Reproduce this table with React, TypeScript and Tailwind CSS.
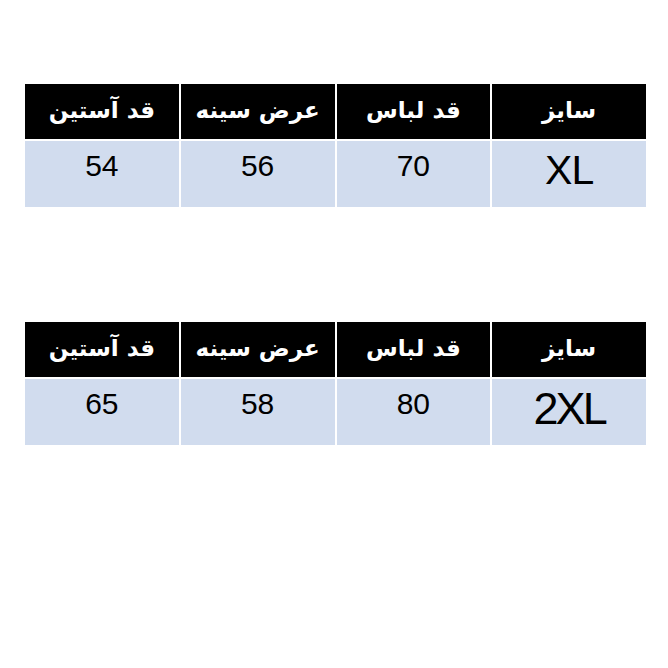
const tables = [
  { size: "XL", length: "70", chest: "56", sleeve: "54", sizeClass: "text-[41px] tracking-[-1px]" },
  { size: "2XL", length: "80", chest: "58", sleeve: "65", sizeClass: "text-[45px] tracking-[-3px]" },
];

const headers = ["سایز", "قد لباس", "عرض سینه", "قد آستین"];

const SizeTable = ({ row }: { row: (typeof tables)[number] }) => {
  return (
    <div dir="rtl" className="grid grid-cols-4 gap-x-[2px] gap-y-[2px] w-[621px]">
      {headers.map((h) => (
        <div
          key={h}
          className="h-[55px] bg-black flex items-center justify-center pb-[3px] text-white font-bold text-[23px] font-['DejaVu_Sans',sans-serif]"
        >
          {h}
        </div>
      ))}
      <div className="h-[66px] bg-[#d1dcee] flex items-center justify-center pb-[8px]">
        <span className={`leading-none text-black font-['Liberation_Sans',Arial,sans-serif] ${row.sizeClass}`}>
          {row.size}
        </span>
      </div>
      {[row.length, row.chest, row.sleeve].map((v, i) => (
        <div
          key={i}
          className="h-[66px] bg-[#d1dcee] flex justify-center pt-[10px] text-[30px] leading-none text-black font-['Liberation_Sans',Arial,sans-serif]"
        >
          {v}
        </div>
      ))}
    </div>
  );
};

export default function App() {
  return (
    <div className="w-[668px] h-[668px] bg-white pt-[84px] pl-[25px] flex flex-col gap-[115px]">
      {tables.map((t) => (
        <SizeTable key={t.size} row={t} />
      ))}
    </div>
  );
}
